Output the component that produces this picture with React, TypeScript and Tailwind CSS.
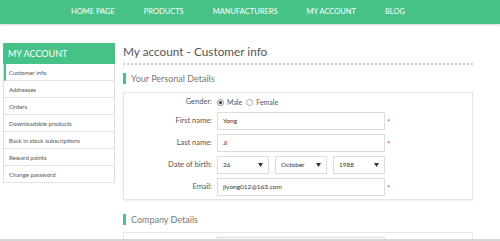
const GREEN = "bg-[#47c287]";

const navItems = ["Home page", "Products", "Manufacturers", "My account", "Blog"];

const sideItems = [
  "Customer info",
  "Addresses",
  "Orders",
  "Downloadable products",
  "Back in stock subscriptions",
  "Reward points",
  "Change password",
];

function Caret() {
  return (
    <svg width="5" height="4" viewBox="0 0 5 4" className="shrink-0">
      <path d="M0 0h5L2.5 4z" fill="#333" />
    </svg>
  );
}

function Field({ value }: { value: string }) {
  return (
    <div className="h-[18px] w-[168px] border border-[#dcdcdc] bg-white pl-[5px] flex items-center text-[6.5px] text-[#333]">
      {value}
    </div>
  );
}

function Select({ value }: { value: string }) {
  return (
    <div className="h-[18px] w-[52px] border border-[#dcdcdc] bg-white px-[5px] flex items-center justify-between text-[6.5px] text-[#333]">
      <span>{value}</span>
      <Caret />
    </div>
  );
}

function Star() {
  return <span className="-ml-[3px] text-[8px] text-[#e4434b] leading-none pt-[2px]">*</span>;
}

function Label({ children }: { children: React.ReactNode }) {
  return <div className="text-right text-[7.5px] text-[#555]">{children}</div>;
}

function SectionTitle({ children }: { children: React.ReactNode }) {
  return (
    <div className="flex items-center h-[11px]">
      <div className={`w-[3px] h-[11px] ${GREEN}`} />
      <span className="ml-[5px] text-[9px] text-[#777] leading-[11px]">{children}</span>
    </div>
  );
}

export default function App() {
  return (
    <div className="w-[500px] h-[241px] overflow-hidden bg-white flex flex-col font-['Lato',sans-serif]">
      <nav className={`h-[24px] shrink-0 ${GREEN} shadow-[0_1px_2px_rgba(0,0,0,0.18)] flex items-center pl-[71px] gap-[29px]`}>
        {navItems.map((n) => (
          <span key={n} className="text-[7.5px] text-white uppercase">
            {n}
          </span>
        ))}
      </nav>

      <div className="flex-1 overflow-hidden flex pt-[19px] pl-[3px]">
        <aside className="w-[112px] shrink-0">
          <div className={`h-[21px] ${GREEN} pl-[5px] flex items-center text-[9px] text-white`}>
            MY ACCOUNT
          </div>
          <ul className="border-x border-[#dedede]">
            {sideItems.map((s, i) => (
              <li
                key={s}
                className={`h-[17px] border-b border-[#e3e3e3] flex items-center text-[6px] text-[#555] ${
                  i === 0 ? "border-l-2 border-l-[#47c287] pl-[3px]" : "pl-[5px]"
                }`}
              >
                {s}
              </li>
            ))}
          </ul>
        </aside>

        <main className="ml-[8px] w-[350px] shrink-0">
          <h1 className="text-[11.8px] leading-[18px] text-[#555]">My account - Customer info</h1>
          <div className="mt-[2px] h-[2px] border-b-2 border-dotted border-[#cfcfcf]" />

          <div className="mt-[8px]">
            <SectionTitle>Your Personal Details</SectionTitle>
          </div>

          <div className="mt-[8px] border border-[#e6e6e6] shadow-[0_1px_2px_rgba(0,0,0,0.08)] pt-[3px] pb-[3px]">
            <div className="grid grid-cols-[88px_auto_1fr] gap-x-[5px] gap-y-[4px] items-center">
              <Label>Gender:</Label>
              <div className="flex items-center gap-[3px] h-[12px] text-[7px] text-[#555]">
                <span className="w-[7px] h-[7px] rounded-full border border-[#888] flex items-center justify-center">
                  <span className="w-[3px] h-[3px] rounded-full bg-[#333]" />
                </span>
                <span>Male</span>
                <span className="w-[7px] h-[7px] rounded-full border border-[#aaa] ml-[1px]" />
                <span>Female</span>
              </div>
              <div />

              <Label>First name:</Label>
              <Field value="Yong" />
              <Star />

              <Label>Last name:</Label>
              <Field value="Ji" />
              <Star />

              <Label>Date of birth:</Label>
              <div className="flex gap-[6px]">
                <Select value="26" />
                <Select value="October" />
                <Select value="1988" />
              </div>
              <div />

              <Label>Email:</Label>
              <Field value="jiyong012@163.com" />
              <Star />
            </div>
          </div>

          <div className="mt-[14px]">
            <SectionTitle>Company Details</SectionTitle>
          </div>

          <div className="mt-[7px] border border-[#e6e6e6] pt-[4px] pl-[93px] h-[40px]">
            <div className="h-[18px] w-[168px] border border-[#dcdcdc]" />
          </div>
        </main>
      </div>
      <div className="h-[2px] shrink-0 bg-[#d6d6d6]" />
    </div>
  );
}
